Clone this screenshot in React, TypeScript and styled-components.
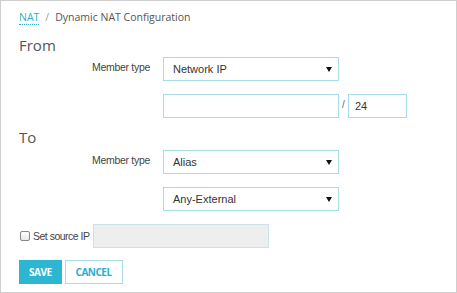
import styled, { createGlobalStyle } from 'styled-components';

const GlobalStyle = createGlobalStyle`
  html, body {
    margin: 0;
    padding: 0;
    background: #fff;
  }
  * {
    box-sizing: border-box;
  }
`;

const Frame = styled.div`
  width: 457px;
  height: 293px;
  border: 1px solid #cfcfcf;
  padding: 0 18px;
  display: flex;
  flex-direction: column;
  font-family: "Liberation Sans", Arial, sans-serif;
  color: #444;
`;

const Breadcrumb = styled.div`
  margin-top: 8px;
  font-family: "Open Sans", sans-serif;
  font-size: 10.5px;
  line-height: 16px;
  color: #555;
  display: flex;
  align-items: center;
  gap: 6px;
`;

const CrumbLink = styled.a`
  color: #2aaecb;
  text-decoration: none;
  border-bottom: 1px dotted #2aaecb;
  line-height: 13px;
  margin-top: 2px;
`;

const Sep = styled.span`
  color: #999;
`;

const Heading = styled.h2<{ $top: number }>`
  margin: ${(p) => p.$top}px 0 0;
  font-family: "Open Sans", sans-serif;
  font-weight: 400;
  font-size: 15px;
  line-height: 20px;
  color: #555;
`;

const Row = styled.div<{ $top: number }>`
  display: flex;
  align-items: flex-start;
  margin-top: ${(p) => p.$top}px;
  height: 24px;
`;

const Label = styled.label`
  width: 144px;
  flex: none;
  padding-left: 73px;
  padding-top: 4px;
  font-size: 10.5px;
  letter-spacing: -0.3px;
  color: #444;
  white-space: nowrap;
`;

const Spacer = styled.div`
  width: 144px;
  flex: none;
`;

const Select = styled.div`
  width: 176px;
  height: 24px;
  border: 1px solid #a9dde5;
  display: flex;
  align-items: center;
  justify-content: space-between;
  padding: 0 6px 0 9px;
  font-size: 11px;
  color: #333;
  background: #fff;
`;

const Caret = styled.span`
  width: 0;
  height: 0;
  border-left: 3px solid transparent;
  border-right: 3px solid transparent;
  border-top: 5px solid #111;
`;

const TextBox = styled.div<{ $width: number; $disabled?: boolean }>`
  width: ${(p) => p.$width}px;
  flex: none;
  height: 24px;
  border: 1px solid ${(p) => (p.$disabled ? '#c8e4e9' : '#a9dde5')};
  background: ${(p) => (p.$disabled ? '#eeeeee' : '#fff')};
  display: flex;
  align-items: center;
  padding: 0 6px;
  font-size: 11px;
  color: #333;
`;

const Slash = styled.span`
  width: 9px;
  text-align: center;
  font-size: 10px;
  color: #666;
  padding-top: 5px;
`;

const CheckRow = styled.div`
  display: flex;
  align-items: center;
  margin-top: 13px;
  height: 24px;
`;

const Check = styled.span`
  width: 10px;
  height: 10px;
  flex: none;
  border: 1px solid #888;
  border-radius: 2px;
  background: linear-gradient(#fff, #e8e8e8);
  margin: 0 3px 0 1px;
`;

const CheckText = styled.span`
  font-size: 10.5px;
  letter-spacing: -0.5px;
  color: #444;
  margin-right: 3px;
  white-space: nowrap;
`;

const Buttons = styled.div`
  display: flex;
  gap: 3px;
  margin-top: 12px;
`;

const Button = styled.button<{ $primary?: boolean }>`
  height: 24px;
  padding: 0 ${(p) => (p.$primary ? 9 : 10)}px;
  font-family: "Open Sans", sans-serif;
  font-weight: 700;
  font-size: 10px;
  letter-spacing: -0.5px;
  border: 1px solid ${(p) => (p.$primary ? '#2db6d1' : '#a9dde5')};
  background: ${(p) => (p.$primary ? '#2db6d1' : '#fff')};
  color: ${(p) => (p.$primary ? '#fff' : '#2aaecb')};
  cursor: pointer;
`;

export default function App() {
  return (
    <>
      <GlobalStyle />
      <Frame>
        <Breadcrumb>
          <CrumbLink href="#">NAT</CrumbLink>
          <Sep>/</Sep>
          <span>Dynamic NAT Configuration</span>
        </Breadcrumb>

        <Heading $top={10}>From</Heading>
        <Row $top={2}>
          <Label>Member type</Label>
          <Select>
            Network IP
            <Caret />
          </Select>
        </Row>
        <Row $top={13}>
          <Spacer />
          <TextBox $width={176} />
          <Slash>/</Slash>
          <TextBox $width={59}>24</TextBox>
        </Row>

        <Heading $top={9}>To</Heading>
        <Row $top={3}>
          <Label>Member type</Label>
          <Select>
            Alias
            <Caret />
          </Select>
        </Row>
        <Row $top={13}>
          <Spacer />
          <Select>
            Any-External
            <Caret />
          </Select>
        </Row>

        <CheckRow>
          <Check />
          <CheckText>Set source IP</CheckText>
          <TextBox $width={176} $disabled />
        </CheckRow>

        <Buttons>
          <Button $primary>SAVE</Button>
          <Button>CANCEL</Button>
        </Buttons>
      </Frame>
    </>
  );
}
